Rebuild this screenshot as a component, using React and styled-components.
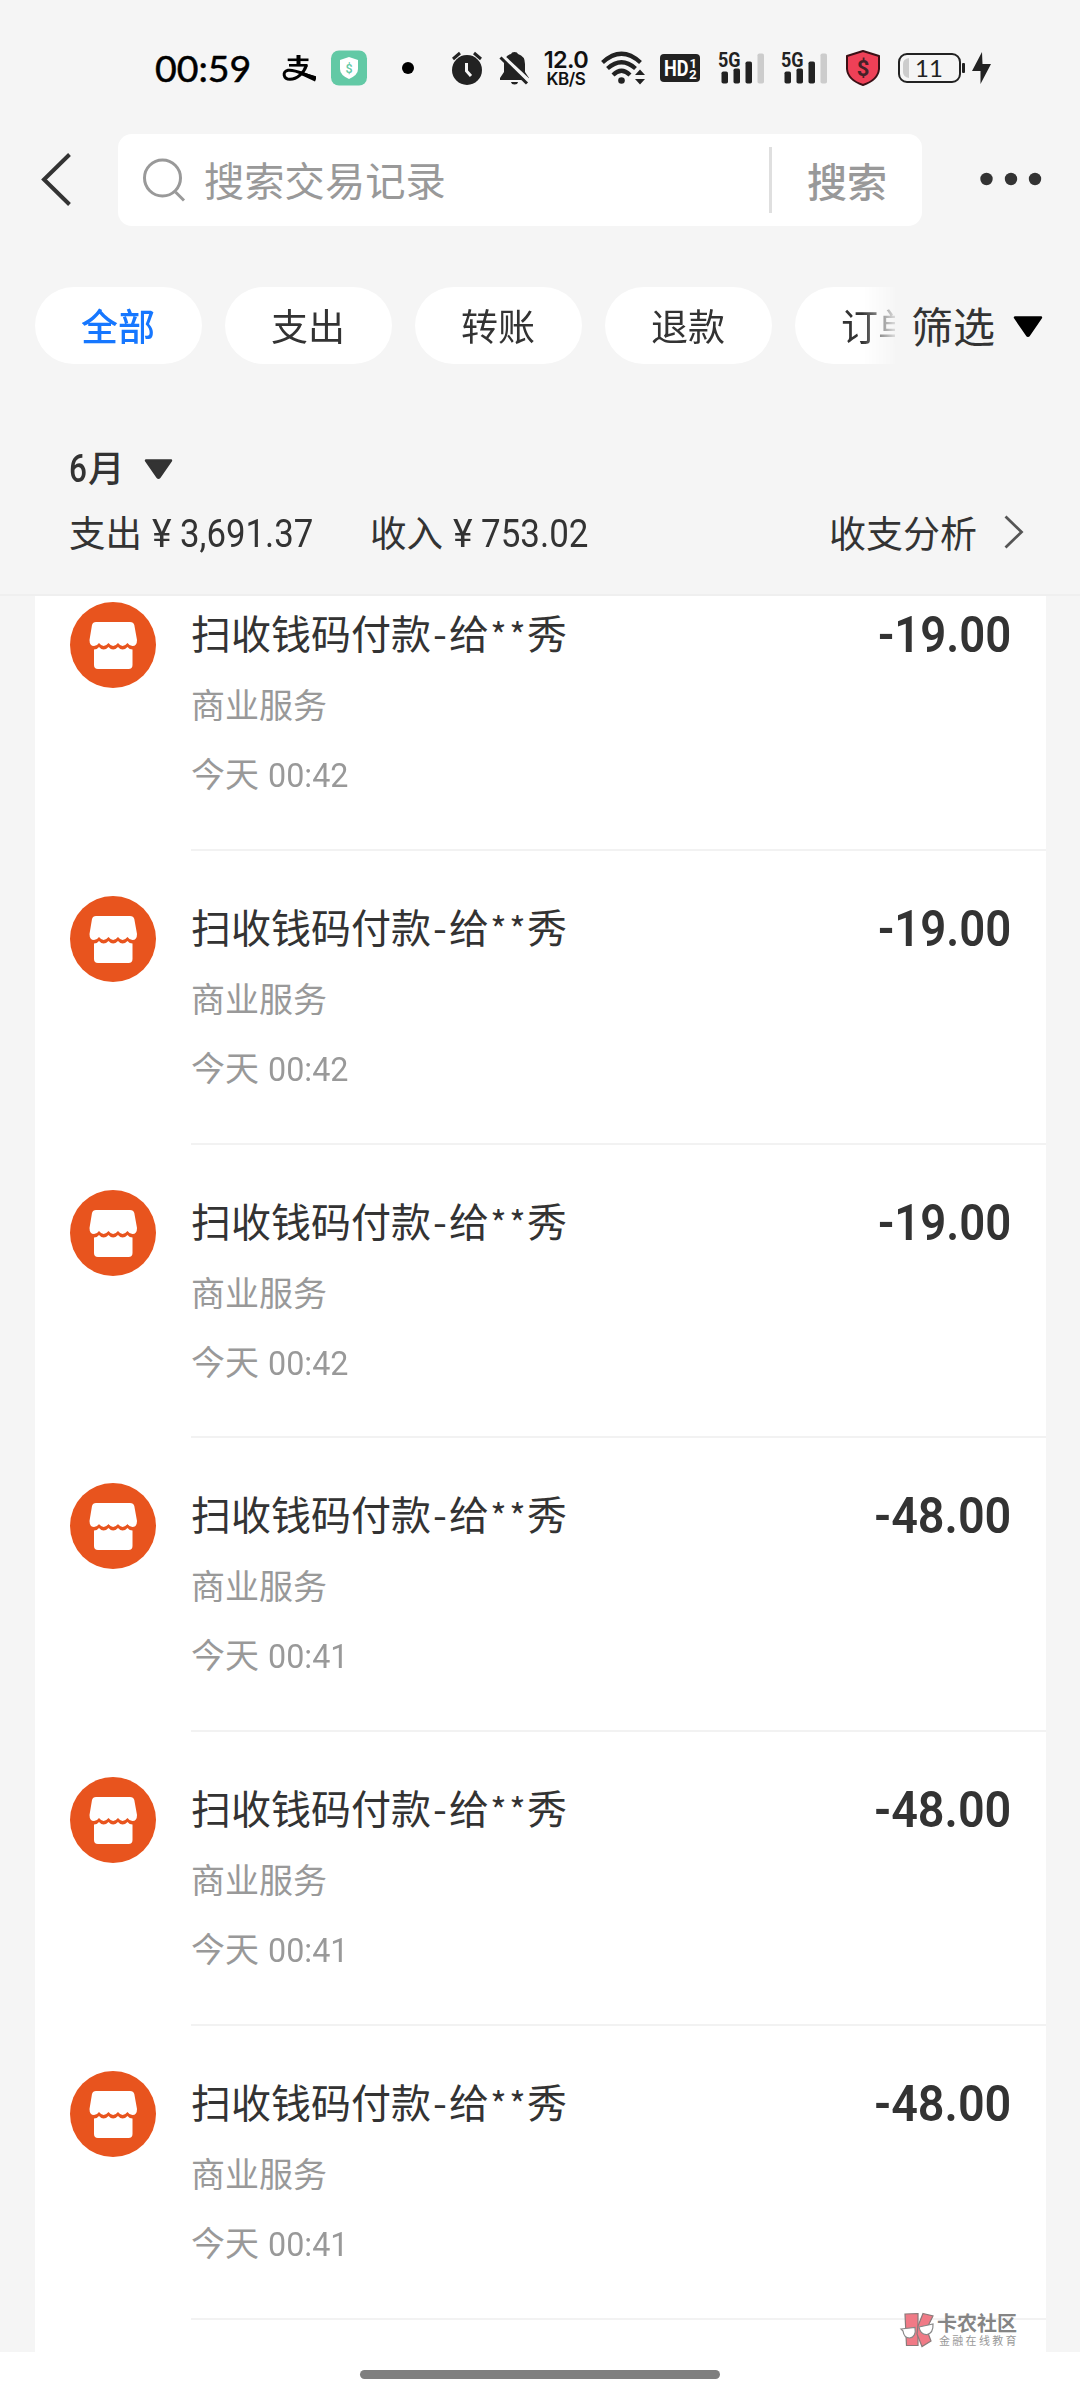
import React from "react";
import styled, { createGlobalStyle } from "styled-components";

const Global = createGlobalStyle`
  * { box-sizing: border-box; }
  body {
    margin: 0;
    background: #f5f5f5;
    font-family: "Noto Sans CJK SC", "Noto Sans", sans-serif;
    color: #333;
  }
`;

const Screen = styled.div`
  position: relative;
  display: flex;
  flex-direction: column;
  width: 1080px;
  height: 2400px;
  overflow: hidden;
  background: #f5f5f5;
`;

const StatusBar = styled.header`
  display: flex;
  align-items: center;
  flex: none;
  height: 134px;
  padding: 2px 0 0 154px;
`;

const Clock = styled.time`
  width: 128px;
  padding-left: 1px;
  font: 400 37.5px/40px Lato, sans-serif;
  color: #000;
  -webkit-text-stroke: 0.5px #000;
`;

const Glyph = styled.svg`
  display: block;
  flex: none;
  width: ${(p) => p.$w}px;
  height: ${(p) => p.$h}px;
  margin-right: ${(p) => p.$gap || 0}px;
  overflow: visible;
`;

const Speed = styled.div`
  display: flex;
  flex-direction: column;
  align-items: center;
  width: 46px;
  margin-right: 12px;
  padding-top: 1px;
  color: #111;
  font-family: Inter, sans-serif;
`;

const SpeedValue = styled.span`
  font-size: 23.5px;
  line-height: 20px;
  font-weight: 600;
  letter-spacing: -0.6px;
`;

const SpeedUnit = styled.span`
  font-size: 17px;
  line-height: 18px;
  font-weight: 600;
  letter-spacing: -0.4px;
`;

const NavBar = styled.nav`
  display: flex;
  align-items: center;
  flex: none;
  height: 92px;
  padding-left: 40px;
`;

const SearchBox = styled.div`
  display: flex;
  align-items: center;
  width: 804px;
  height: 92px;
  margin-left: 46px;
  padding-left: 25px;
  border-radius: 14px;
  background: #fff;
`;

const Placeholder = styled.span`
  width: 565px;
  margin-left: 18px;
  padding-bottom: 2px;
  font-size: 40.3px;
  line-height: 60px;
  color: #999;
`;

const Divider = styled.i`
  width: 3px;
  height: 66px;
  background: #dfdfdf;
`;

const SearchButton = styled.span`
  margin-left: 35px;
  font-size: 40px;
  line-height: 60px;
  font-weight: 500;
  color: #999;
`;

const FilterBar = styled.div`
  display: flex;
  align-items: center;
  flex: none;
  height: 77px;
  margin-top: 61px;
`;

const Chips = styled.div`
  display: flex;
  gap: 23px;
  width: 895px;
  padding-left: 35px;
  overflow: hidden;
  mask-image: linear-gradient(to right, #000 862px, transparent 900px);
`;

const Chip = styled.span`
  flex: none;
  width: 167px;
  height: 77px;
  padding-right: 1px;
  border-radius: 39px;
  background: #fff;
  font-size: 37px;
  line-height: 77px;
  text-align: center;
  font-weight: ${(p) => (p.$active ? 500 : 400)};
  color: ${(p) => (p.$active ? "#1677ff" : "#333")};
`;

const FilterLabel = styled.span`
  width: 102px;
  margin-left: 16px;
  padding-bottom: 2px;
  font-size: 42px;
  line-height: 75px;
`;

const FilterArrow = styled.span`
  padding-top: 2px;
`;

const Summary = styled.section`
  flex: none;
  height: 230px;
  padding: 78px 56px 0 69px;
  font-size: 36.5px;
  line-height: 50px;
`;

const Month = styled.div`
  display: flex;
  align-items: center;
  height: 50px;
  font-weight: 500;
`;

const MonthText = styled.span`
  display: flex;
  align-items: baseline;
  width: 75px;
  white-space: nowrap;
`;

const MonthNumber = styled.span`
  width: 19px;
`;

const MonthArrow = styled.span`
  padding-top: 4px;
`;

const Totals = styled.div`
  display: flex;
  align-items: center;
  height: 50px;
  margin-top: 15px;
`;

const Total = styled.div`
  display: flex;
  align-items: baseline;
  width: ${(p) => p.$w}px;
  white-space: nowrap;
`;

const Digits = styled.span`
  display: inline-block;
  margin-left: ${(p) => p.$ml || 0}px;
  font-family: Roboto, sans-serif;
  font-size: ${(p) => p.$size}px;
  font-weight: ${(p) => p.$weight || 400};
  line-height: 1;
  transform: scaleX(${(p) => p.$sx});
  transform-origin: ${(p) => (p.$right ? "right" : "left")} center;
`;

const Analysis = styled.span`
  margin-left: auto;
  margin-right: 27px;
  font-size: 37px;
`;

const List = styled.main`
  flex: none;
  height: 1758px;
  overflow: hidden;
  border-top: 2px solid #efefef;
`;

const Card = styled.div`
  width: 1011px;
  height: 1758px;
  margin-left: 35px;
  overflow: hidden;
  background: #fff;
`;

const Rows = styled.div`
  margin-top: -39px;
`;

const Row = styled.article`
  display: flex;
  height: 293.8px;
  padding: 45px 0 0 35px;
`;

const RowBody = styled.div`
  display: flex;
  justify-content: space-between;
  flex: 1;
  margin-left: 35px;
  padding-right: 35px;
  border-bottom: 2px solid #f2f2f2;
`;

const Title = styled.div`
  height: 60px;
  font-size: 40px;
  line-height: 60px;
  white-space: nowrap;
`;

const Amount = styled.div`
  height: 60px;
  padding-top: 3px;
  font-size: 40px;
  line-height: 61px;
  white-space: nowrap;
`;

const Mark = styled.span`
  display: inline-block;
  width: ${(p) => p.$w}px;
  font-size: ${(p) => p.$size || 40}px;
  line-height: 1;
  text-align: center;
`;

const Meta = styled.div`
  margin-top: ${(p) => p.$mt}px;
  font-size: 34px;
  line-height: 50px;
  color: #999;
  white-space: nowrap;
`;

const HomeArea = styled.footer`
  display: flex;
  justify-content: center;
  flex: none;
  height: 48px;
  padding-top: 18px;
  background: #fff;
`;

const HomeBar = styled.i`
  width: 360px;
  height: 9px;
  border-radius: 4.5px;
  background: #7f7f7f;
`;

const Watermark = styled.aside`
  position: absolute;
  left: 900px;
  top: 2312px;
  display: flex;
`;

const MarkText = styled.div`
  display: flex;
  flex-direction: column;
  margin-left: 3px;
  white-space: nowrap;
`;

const MarkName = styled.span`
  font-size: 20px;
  line-height: 22px;
  font-weight: 700;
  color: #858585;
`;

const MarkSub = styled.span`
  margin-left: 2px;
  font-size: 11px;
  line-height: 13px;
  letter-spacing: 2.3px;
  color: #999;
`;

const Triangle = ({ w, h, color }) => (
  <Glyph $w={w} $h={h} viewBox="0 0 30 20" preserveAspectRatio="none">
    <path d="M2 1.5H28L16 18.2Q15 19.4 14 18.2Z" fill={color} stroke={color} strokeWidth="2.4" strokeLinejoin="round" />
  </Glyph>
);

const Signal = ({ gap }) => (
  <Glyph $w={46} $h={36} $gap={gap} viewBox="0 0 46 36">
    <text x="-1" y="17" fontFamily="Roboto, sans-serif" fontWeight="700" fontSize="21" textLength="22.500" lengthAdjust="spacingAndGlyphs" fill="#222">5G</text>
    <rect x="2.500" y="21.500" width="6.500" height="12" rx="1.800" fill="#222" />
    <rect x="14.500" y="18.500" width="6.500" height="15" rx="1.800" fill="#222" />
    <rect x="26.500" y="11.500" width="6.500" height="22" rx="1.800" fill="#222" />
    <rect x="38.500" y="3.500" width="6.500" height="30" rx="1.800" fill="#ccc" />
  </Glyph>
);

const Store = () => (
  <Glyph $w={86} $h={86} viewBox="0 0 86 86">
    <circle cx="43" cy="43" r="43" fill="#e8541e" />
    <path d="M26 20H60Q63.500 20 64.300 23L67 38Q67 44 62.500 44Q59.500 44 57.500 41Q52.500 47 48 41Q43 47 38.500 41Q33.500 47 29 41Q27 44 24 44Q19.500 44 19.500 38L22 23Q22.800 20 26 20Z" fill="#fff" />
    <path d="M24 47.500Q27 47.500 29 45Q33.500 50 38.500 45Q43 50 48 45Q52.500 50 57.500 45Q59.500 47.500 62.500 47.500V63Q62.500 67 58.500 67H28Q24 67 24 63Z" fill="#fff" />
  </Glyph>
);

const chips = ["全部", "支出", "转账", "退款", "订单"];

const records = [
  { amount: "-19.00", time: "00:42", stretch: 0.92 },
  { amount: "-19.00", time: "00:42", stretch: 0.92 },
  { amount: "-19.00", time: "00:42", stretch: 0.92 },
  { amount: "-48.00", time: "00:41", stretch: 0.945 },
  { amount: "-48.00", time: "00:41", stretch: 0.945 },
  { amount: "-48.00", time: "00:41", stretch: 0.945 },
];

export default function App() {
  return (
    <Screen>
      <Global />
      <StatusBar>
        <Clock>00:59</Clock>
        <Glyph $w={35} $h={36} $gap={14} viewBox="0 0 35 36">
          <g fill="none" stroke="#000">
            <path d="M5.700 9.800H26.500" strokeWidth="2.600" />
            <path d="M16.500 5V15" strokeWidth="4" />
            <path d="M7 15.300H25.500" strokeWidth="2.600" />
            <path d="M24.500 15C22 23 15 29.300 8 29.300C1.200 29.300 0 21.500 6 20.300C13 19 20 24 33 28" strokeWidth="3" />
          </g>
          <path d="M18 21.500L34 26.200Q34.500 29 33 31.500L18 24.500Z" />
        </Glyph>
        <Glyph $w={36} $h={36} $gap={35} viewBox="0 0 36 36">
          <rect width="36" height="35" y="0.500" rx="8" fill="#62c9a5" />
          <path d="M18 7L27 10V19Q27 25 18 29Q9 25 9 19V10Z" fill="#fff" />
          <text x="18" y="22.500" textAnchor="middle" fontFamily="Roboto, sans-serif" fontWeight="500" fontSize="12.500" fill="#62c9a5">$</text>
        </Glyph>
        <Glyph $w={12} $h={12} $gap={38} viewBox="0 0 12 12"><circle cx="6" cy="6" r="6" /></Glyph>
        <Glyph $w={30} $h={36} $gap={17} viewBox="0 0 30 36">
          <circle cx="15" cy="20" r="15" fill="#222" />
          <path d="M1 9L8 3M29 9L22 3" stroke="#222" strokeWidth="3" />
          <path d="M14.500 13V21L19 26" fill="none" stroke="#f5f5f5" strokeWidth="3" />
        </Glyph>
        <Glyph $w={31} $h={36} $gap={13} viewBox="0 0 31 36">
          <path d="M5 14Q5 6 12 4Q12.500 2 15.500 2Q18.500 2 19 4Q26 6 26 14V22L30 28V30H1V28L5 22Z" fill="#222" />
          <path d="M12 32H19Q18.500 34.500 15.500 34.500Q12.500 34.500 12 32Z" fill="#222" />
          <path d="M1 4L31 32" stroke="#f5f5f5" strokeWidth="4" />
          <path d="M1.500 7.500L28 33.500" stroke="#222" strokeWidth="3" />
        </Glyph>
        <Speed>
          <SpeedValue>12.0</SpeedValue>
          <SpeedUnit>KB/S</SpeedUnit>
        </Speed>
        <Glyph $w={44} $h={36} $gap={15} viewBox="0 0 44 36">
          <g fill="none" stroke="#222" strokeWidth="4.200">
            <path d="M1.500 12.500Q20.500-5 39.500 12.500" />
            <path d="M6.500 18.500Q20.500 6 34.500 18.500" />
            <path d="M12 25Q20.500 16.500 29 25" />
          </g>
          <circle cx="20.500" cy="30.500" r="3.300" fill="#222" />
          <path d="M34 25L39 19.500L44 25ZM34 29L39 34.500L44 29Z" fill="#222" />
        </Glyph>
        <Glyph $w={40} $h={28} $gap={19} viewBox="0 0 40 28">
          <rect width="40" height="28" rx="4" fill="#222" />
          <text x="4" y="22" fontFamily="Roboto, sans-serif" fontWeight="700" fontSize="22" textLength="24.500" lengthAdjust="spacingAndGlyphs" fill="#fff">HD</text>
          <text x="29.500" y="13.500" fontFamily="Roboto, sans-serif" fontWeight="700" fontSize="13" fill="#fff">1</text>
          <text x="29" y="25" fontFamily="Roboto, sans-serif" fontWeight="700" fontSize="13.500" fill="#fff">2</text>
        </Glyph>
        <Signal gap={17} />
        <Signal gap={18} />
        <Glyph $w={34} $h={36} $gap={18} viewBox="0 0 34 36">
          <path d="M17 1L33 6V19Q32 30 17 35Q2 30 1 19V6Z" fill="#ee4057" stroke="#3a1016" strokeWidth="2" strokeLinejoin="round" />
          <text x="17" y="26" textAnchor="middle" fontFamily="Roboto, sans-serif" fontWeight="700" fontSize="22" fill="#432128">$</text>
        </Glyph>
        <Glyph $w={67} $h={30} $gap={7} viewBox="0 0 67 30">
          <rect x="1" y="1" width="61" height="28" rx="8" fill="none" stroke="#222" strokeWidth="2" />
          <path d="M11 5V25Q5 24 5 19V11Q5 6 11 5Z" fill="#ccc" />
          <rect x="64" y="10" width="3" height="10" rx="1" fill="#222" />
          <text x="31" y="23.500" textAnchor="middle" fontFamily="Lato, sans-serif" fontSize="24" fill="#222">11</text>
        </Glyph>
        <Glyph $w={19} $h={32} viewBox="0 0 19 32">
          <path d="M10 0L0 19H8.500V32L19 12H10.500Z" fill="#222" />
        </Glyph>
      </StatusBar>

      <NavBar>
        <Glyph $w={32} $h={52} viewBox="0 0 32 52">
          <path d="M29.500 0.500L4 25.500L29.500 50.500" fill="none" stroke="#333" strokeWidth="4" />
        </Glyph>
        <SearchBox>
          <Glyph $w={43} $h={44} viewBox="0 0 43 44">
            <circle cx="19.500" cy="20" r="18" fill="none" stroke="#999" strokeWidth="3" />
            <path d="M32.500 34L41 42.500" stroke="#999" strokeWidth="3" />
          </Glyph>
          <Placeholder>搜索交易记录</Placeholder>
          <Divider />
          <SearchButton>搜索</SearchButton>
        </SearchBox>
        <Glyph $w={62} $h={12} viewBox="-58 0 62 12">
          <circle cx="6.500" cy="5" r="6.200" fill="#333" />
          <circle cx="31" cy="5" r="6.200" fill="#333" />
          <circle cx="55" cy="5" r="6.200" fill="#333" />
        </Glyph>
      </NavBar>

      <FilterBar>
        <Chips>
          {chips.map((c, i) => (
            <Chip key={c} $active={i === 0}>{c}</Chip>
          ))}
        </Chips>
        <FilterLabel>筛选</FilterLabel>
        <FilterArrow><Triangle w={30} h={21} color="#000" /></FilterArrow>
      </FilterBar>

      <Summary>
        <Month>
          <MonthText>
            <MonthNumber><Digits $size={38} $sx={0.83} $weight={500}>6</Digits></MonthNumber>
            月
          </MonthText>
          <MonthArrow><Triangle w={29} h={20} color="#333" /></MonthArrow>
        </Month>
        <Totals>
          <Total $w={301}>支出<Digits $ml={10} $size={38} $sx={0.98}>¥</Digits><Digits $ml={8} $size={38} $sx={0.915}>3,691.37</Digits></Total>
          <Total $w={260}>收入<Digits $ml={10} $size={38} $sx={0.98}>¥</Digits><Digits $ml={8} $size={38} $sx={0.92}>753.02</Digits></Total>
          <Analysis>收支分析</Analysis>
          <Glyph $w={20} $h={34} viewBox="0 0 20 34">
            <path d="M1.500 1.500L17.500 17L1.500 32.500" fill="none" stroke="#555" strokeWidth="2.800" />
          </Glyph>
        </Totals>
      </Summary>

      <List>
        <Card>
          <Rows>
            {records.map((r, i) => (
              <Row key={i}>
                <Store />
                <RowBody>
                  <div>
                    <Title>扫收钱码付款<Mark $w={18}>-</Mark>给<Mark $w={19} $size={35}>*</Mark><Mark $w={19} $size={35}>*</Mark>秀</Title>
                    <Meta $mt={17}>商业服务</Meta>
                    <Meta $mt={19}>今天 <Digits $ml={1} $size={34} $sx={0.95}>{r.time}</Digits></Meta>
                  </div>
                  <Amount><Digits $size={49.5} $sx={r.stretch} $weight={600} $right>{r.amount}</Digits></Amount>
                </RowBody>
              </Row>
            ))}
          </Rows>
        </Card>
      </List>

      <HomeArea><HomeBar /></HomeArea>

      <Watermark>
        <Glyph $w={34} $h={36} viewBox="0 0 34 36">
          <g fill="#f07a86" stroke="#8a7a7a" strokeWidth="1.200">
            <path d="M5 2L18 1.500V33.500H6.500Z" />
            <path d="M23 1.500L33 4L26.500 17L31 29L22 34.500L17 22L18 14Z" />
          </g>
          <g fill="#fff" stroke="#888" strokeWidth="1.200">
            <path d="M1 17L15 15.500Q16.500 25 9.500 26Q4 26 3 19Z" />
            <path d="M19 15L33 12Q33.500 21 27 22.500Q20.500 23 19 15Z" />
          </g>
        </Glyph>
        <MarkText>
          <MarkName>卡农社区</MarkName>
          <MarkSub>金融在线教育</MarkSub>
        </MarkText>
      </Watermark>
    </Screen>
  );
}
